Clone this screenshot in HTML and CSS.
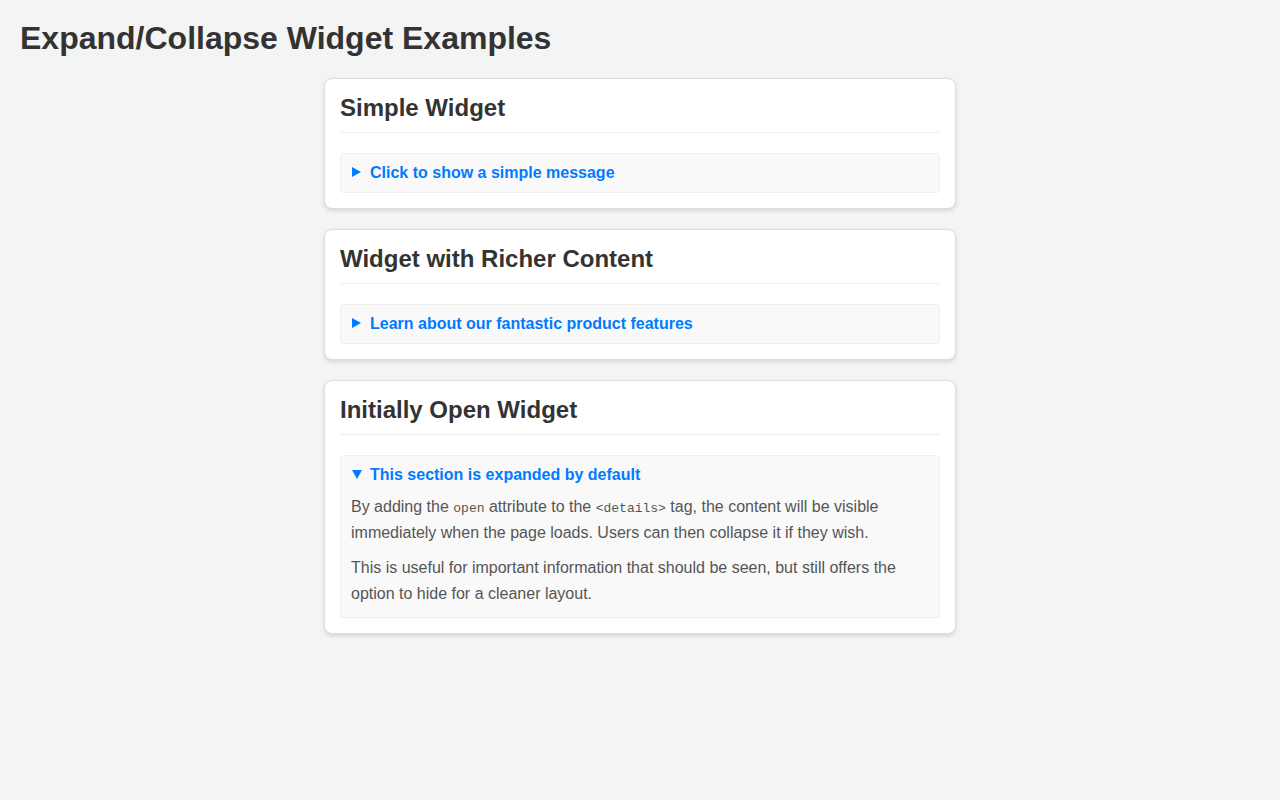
FILE: index.html
```html
<!DOCTYPE html>
<html lang="en">
<head>
<meta charset="utf-8">
<title>Expand/Collapse Widget Examples</title>
<link rel="stylesheet" href="styles.css">
</head>
<body>
<h1 class="page-title">Expand/Collapse Widget Examples</h1>

<div class="card">
  <h2 class="card-title">Simple Widget</h2>
  <details class="widget">
    <summary class="widget-summary">Click to show a simple message</summary>
    <div class="widget-content">
      <p>Hello! This is a simple hidden message.</p>
    </div>
  </details>
</div>

<div class="card">
  <h2 class="card-title">Widget with Richer Content</h2>
  <details class="widget">
    <summary class="widget-summary">Learn about our fantastic product features</summary>
    <div class="widget-content">
      <p>Our product offers many features.</p>
    </div>
  </details>
</div>

<div class="card">
  <h2 class="card-title">Initially Open Widget</h2>
  <details class="widget" open>
    <summary class="widget-summary">This section is expanded by default</summary>
    <div class="widget-content">
      <p>By adding the <code>open</code> attribute to the <code>&lt;details&gt;</code> tag, the content will be visible immediately when the page loads. Users can then collapse it if they wish.</p>
      <p>This is useful for important information that should be seen, but still offers the option to hide for a cleaner layout.</p>
    </div>
  </details>
</div>
</body>
</html>
```

FILE: styles.css
```css
html, body {
  margin: 0;
  padding: 0;
}

body {
  background: #f4f4f4;
  color: #333;
  font-family: "Liberation Sans", Arial, Helvetica, sans-serif;
  padding: 20px;
}

.page-title {
  font-size: 32px;
  font-weight: bold;
  margin: 0 0 21px 0;
  color: #333;
}

.card {
  background: #fff;
  border: 1px solid #ddd;
  border-radius: 8px;
  box-shadow: 0 2px 4px rgba(0, 0, 0, 0.12);
  max-width: 600px;
  margin: 0 auto 20px auto;
  padding: 15px;
}

.card-title {
  font-size: 24px;
  font-weight: bold;
  margin: 0 0 20px 0;
  padding-bottom: 10px;
  border-bottom: 1px solid #eee;
  color: #333;
}

.widget {
  background: #f9f9f9;
  border: 1px solid #eee;
  border-radius: 4px;
  padding: 10px;
}

.widget-summary {
  color: #007bff;
  font-weight: bold;
  font-size: 16px;
  cursor: pointer;
  list-style: none;
}

.widget-summary::-webkit-details-marker {
  display: none;
}

.widget-summary::before {
  content: "";
  display: inline-block;
  width: 0;
  height: 0;
  border-top: 5px solid transparent;
  border-bottom: 5px solid transparent;
  border-left: 9px solid #007bff;
  margin-left: 1px;
  margin-right: 9px;
  vertical-align: 1px;
}

.widget[open] > .widget-summary::before {
  border-left: 5px solid transparent;
  border-right: 5px solid transparent;
  border-top: 9px solid #007bff;
  border-bottom: 0;
  margin-right: 8px;
  vertical-align: 1px;
}

.widget-content {
  color: #555;
  font-size: 16px;
  line-height: 1.6;
}

.widget-content p {
  margin: 10px 0 0 0;
}

.widget-content p + p {
  margin-top: 10px;
}

.widget-content code {
  font-family: "Liberation Mono", "Courier New", monospace;
  font-size: 13px;
}
```
